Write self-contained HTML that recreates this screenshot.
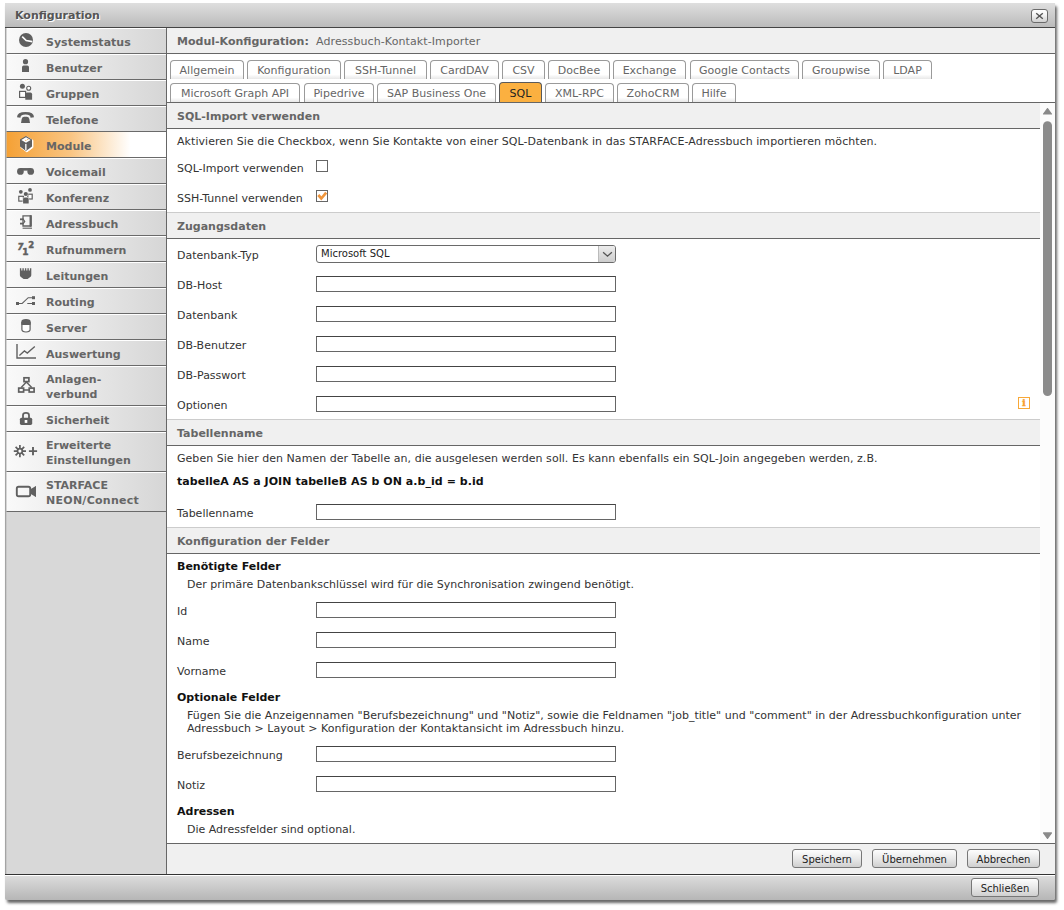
<!DOCTYPE html>
<html lang="de">
<head>
<meta charset="utf-8">
<title>Konfiguration</title>
<style>
*{box-sizing:border-box}
html,body{margin:0;padding:0}
body{width:1064px;height:910px;background:#fff;overflow:hidden;position:relative;font-family:"DejaVu Sans","Liberation Sans",sans-serif;font-size:11px;color:#333;line-height:13px}
.abs{position:absolute}
#win{position:absolute;left:5px;top:3px;width:1050px;height:897px;background:#d9d9d9;border-radius:0 2px 2px 2px;box-shadow:2px 3px 3px rgba(0,0,0,.6)}
#title{position:absolute;left:0;top:0;width:1050px;height:25px;background:linear-gradient(#dfdfdf,#bbb);border-bottom:1px solid #444;}
#title span{position:absolute;left:10px;top:6px;font-weight:bold;color:#555;text-shadow:1px 1px 0 #fff}
#close{position:absolute;left:1026px;top:6px;width:17px;height:14px;border:1px solid #6a6a6a;border-radius:3px;background:linear-gradient(#fff,#f4f4f4 40%,#cfcfcf)}
#close svg{position:absolute;left:0;top:0}
#ledge{position:absolute;left:0;top:25px;width:2px;height:846px;background:linear-gradient(90deg,#a4a4a4 50%,rgba(190,190,190,.6) 50%);z-index:6}
/* sidebar */
#side{position:absolute;left:0;top:25px;width:161px;height:846px;background:#d8d8d8}
.it{position:absolute;left:0;width:161px;height:26px;border-bottom:1px solid #6a6a6a;box-shadow:inset 0 1px 0 #fff;background:linear-gradient(90deg,#fafafa,#d6d6d6);font-weight:bold;color:#666}
.it span{position:absolute;left:41px;top:8px;white-space:nowrap}
.it.two{height:40px}
.it.two span{top:6px;line-height:15px}
.it.cur{box-shadow:none;background:linear-gradient(90deg,#f5a033 0,#f9c583 41%,#fff 78%,#fff 100%)}
.it svg{position:absolute;left:0;top:0}
#vline{position:absolute;left:161px;top:25px;width:1px;height:846px;background:#666}
/* main */
#main{position:absolute;left:162px;top:25px;width:888px;height:846px;background:#fff}
#mhead{position:absolute;left:0;top:0;width:888px;height:26px;background:#f0f0f0;border-bottom:1px solid #666}
#mhead b{position:absolute;left:10px;top:7px;color:#666}
#mhead span{position:absolute;left:149px;top:7px;color:#666;letter-spacing:.1px}
.tab{position:absolute;height:19px;border:1px solid #9a9a9a;border-bottom:none;border-radius:4px 4px 0 0;background:linear-gradient(#fff 75%,#e8e8e8);color:#666;padding:3px 0 0 0;text-align:center;white-space:nowrap}
.tab.on{background:#fbb040;color:#222;border-color:#5a5a5a;height:20px;margin-top:-1px;padding-top:4px}
#panel{position:absolute;left:0;top:74px;width:888px;height:742px;border-top:1px solid #666;background:#fff}
.sh{position:absolute;left:0;width:873px;height:26px;background:#f0f0f0;border-top:1px solid #ccc;border-bottom:1px solid #666;font-weight:bold;color:#666;padding:6px 0 0 10px}
.t{position:absolute;left:10px;white-space:nowrap;color:#333}
.b{font-weight:bold;color:#111}
.in{position:absolute;left:149px;width:300px;height:16px;border:1px solid #666;border-top-color:#444;background:#fff}

.sh.first{border-top:none;height:26px;padding-top:7px}
.sh{height:27px;padding-top:7px}
.cb{position:absolute;width:12px;height:12px;border:1px solid #666;background:#fff}
.cb svg{position:absolute;left:-1px;top:-1px}
.sel{position:absolute;width:300px;height:18px;border:1px solid #6a6a6a;border-radius:3px;background:#fff;font-size:10px}
.sel span{position:absolute;left:4px;top:1px;color:#222}
.sel i{position:absolute;right:0;top:0;width:17px;height:16px;border-left:1px solid #bbb;background:linear-gradient(#ececec,#cdcdcd);border-radius:0 2px 2px 0}
.sel i svg{position:absolute;left:0;top:0}
.info{position:absolute;width:12px;height:12px;border:1px solid #f8a838;color:#f8a030;-webkit-text-stroke:.3px #f8a030;font-family:"DejaVu Serif","Liberation Serif",serif;font-weight:bold;font-size:10px;line-height:10px;text-align:center}
#track{position:absolute;left:873px;top:75px;width:15px;height:740px;background:#fcfcfc}
#btnrow{position:absolute;left:0;top:815px;width:888px;height:31px;background:#f0f0f0;border-top:1px solid #666;}
.btn{position:absolute;height:19px;border:1px solid #777;border-radius:3px;background:linear-gradient(#fdfdfd,#e9e9e9 50%,#cfcfcf);color:#222;text-align:center;line-height:19px;font-size:10px}
#foot{position:absolute;left:0;top:871px;width:1050px;height:26px;border-top:1px solid #333;background:linear-gradient(#fff 0,#fff 1px,#dcdcdc 1px,#b6b6b6 100%);border-radius:0 0 2px 2px}
</style>
</head>
<body>
<div id="win">
 <div id="title"><span>Konfiguration</span><div id="close"><svg width="15" height="12" viewBox="0 0 15 12"><path d="M4.2 3.2 L10.8 8.8 M10.8 3.2 L4.2 8.8" stroke="#555" stroke-width="1.4" fill="none"/></svg></div></div>
 <div id="side">
<svg id="icons" width="45" height="490" viewBox="0 0 45 490" style="position:absolute;left:0;top:0;z-index:5" fill="#606060" stroke="none">
 <g transform="translate(-5,-28)">
  <!-- Systemstatus: clock -->
  <circle cx="26" cy="40" r="7"/>
  <path d="M22.2 36.6 L26.2 40.6 L32.3 41.6" fill="none" stroke="#fff" stroke-width="1.6"/>
  <!-- Benutzer -->
  <circle cx="25.5" cy="61.7" r="2.6"/>
  <path d="M22 72 V67.3 Q22 65.6 23.7 65.6 H27.3 Q29 65.6 29 67.3 V72 Z"/>
  <!-- Gruppen -->
  <circle cx="22.4" cy="86.3" r="2.5"/>
  <rect x="19.6" y="91.4" width="6" height="6" fill="#fff" stroke="#606060" stroke-width="1.2"/>
  <circle cx="28.7" cy="88.3" r="2" fill="#fff" stroke="#606060" stroke-width="1.1"/>
  <path d="M25.3 99.8 V94.2 Q25.3 92.6 26.9 92.6 H30.5 Q32.1 92.6 32.1 94.2 V99.8 Z"/>
  <!-- Telefone -->
  <path d="M17 117.2 Q17 112 25.5 112 Q34 112 34 117.2 L30.6 117.8 Q30.4 114.6 25.5 114.6 Q20.6 114.6 20.4 117.8 Z"/>
  <path d="M21 123 L21.7 119 Q22.2 116.7 24.2 116.7 H26.8 Q28.8 116.7 29.3 119 L30 123 Z"/>
  <!-- Module: cube -->
  <path d="M26.9 136.9 L32.9 140.3 V147.5 L26.9 151.9 L20.9 147.5 V140.3 Z" fill="#fff" stroke="#fff" stroke-width="1"/>
  <path d="M26 136 L32 139.4 V146.6 L26 151 L20 146.6 V139.4 Z"/>
  <path d="M26 137.2 L30.7 139.9 L26 142.7 L21.3 139.9 Z" fill="#fff"/>
  <rect x="25.2" y="143.9" width="1.3" height="6.4" fill="#fff"/>
  <path d="M25 140.4 H26.4 M27 139.5 H28.4" stroke="#f5a033" stroke-width=".7" fill="none"/>
  <!-- Voicemail -->
  <circle cx="20.4" cy="171.4" r="3.35"/>
  <circle cx="30.7" cy="171.4" r="3.35"/>
  <rect x="20.4" y="168.05" width="10.3" height="2.6"/>
  <!-- Konferenz -->
  <circle cx="20.8" cy="191.8" r="1.9"/>
  <circle cx="30" cy="189.9" r="1.9"/>
  <rect x="18.8" y="196.3" width="4.6" height="4.8" fill="#fff" stroke="#606060" stroke-width="1.2"/>
  <rect x="27.8" y="194.2" width="4.4" height="4.8" fill="#fff" stroke="#606060" stroke-width="1.2"/>
  <circle cx="25.8" cy="194" r="2.1" stroke="#fff" stroke-width=".9" paint-order="stroke"/>
  <path d="M23.1 203.4 V199 Q23.1 197.4 24.7 197.4 H27.1 Q28.7 197.4 28.7 199 V203.4 Z" stroke="#fff" stroke-width=".9" paint-order="stroke"/>
  <!-- Adressbuch -->
  <path d="M23 215.8 H30.4 V226 H23 Z" fill="none" stroke="#606060" stroke-width="1.3"/>
  <rect x="29.7" y="215.2" width="2.2" height="11.5"/>
  <path d="M22.6 228.2 H32" fill="none" stroke="#606060" stroke-width="1.1"/>
  <rect x="20" y="218.4" width="3.2" height="1.8"/>
  <rect x="20" y="222.7" width="3.2" height="1.8"/>
  <path d="M22.8 218.6 L24.8 221.4 L22.8 224.3" fill="none" stroke="#606060" stroke-width="1.1"/>
  <!-- Leitungen -->
  <path d="M19.9 268.3 H21.3 V270.6 H22.4 V268.3 H23.8 V270.6 H24.9 V268.3 H26.3 V270.6 H27.4 V268.3 H28.8 V270.6 H29.9 V268.3 H31.3 V275.2 Q31.3 276.6 29.6 277.6 L27.6 279 H23.6 L21.6 277.6 Q19.9 276.6 19.9 275.2 Z"/>
  <!-- Routing -->
  <rect x="16" y="302" width="3" height="3"/>
  <rect x="32" y="296.2" width="3" height="3"/>
  <rect x="32" y="302" width="3" height="3"/>
  <path d="M18.5 303.5 H22.2 L28.2 297.7 H32.5 M27.3 303.5 H32.5" fill="none" stroke="#606060" stroke-width="1.1"/>
  <!-- Server -->
  <path d="M21.9 322 V329.6 Q21.9 332 26 332 Q30.1 332 30.1 329.6 V322" fill="#fff" stroke="#606060" stroke-width="1.2"/>
  <path d="M21.3 324.4 V321.8 Q21.3 319.1 26 319.1 Q30.7 319.1 30.7 321.8 V324.4 Q30.7 325 26 325 Q21.3 325 21.3 324.4 Z"/>
  <!-- Auswertung -->
  <path d="M17 344 V358 H36" fill="none" stroke="#606060" stroke-width="1.4"/>
  <path d="M19.4 355.4 L24.4 350.9 L27.3 353.1 L34.8 346.4" fill="none" stroke="#606060" stroke-width="1.3"/>
  <!-- Anlagenverbund -->
  <g fill="none" stroke="#606060" stroke-width="1.7">
   <rect x="24" y="377.8" width="4.9" height="3.8"/>
   <rect x="18.7" y="388.1" width="4.9" height="3.9"/>
   <rect x="29.2" y="388.1" width="4.9" height="3.9"/>
   <path d="M26.4 382 L21.2 387.6 M26.4 382 L31.7 387.6 M23.6 390 H29.2" stroke-width="1.45"/>
  </g>
  <!-- Sicherheit -->
  <path d="M23 418 V415.2 Q23 412.9 26 412.9 Q29 412.9 29 415.2 V418" fill="none" stroke="#606060" stroke-width="1.8"/>
  <rect x="19.9" y="417.7" width="12.3" height="7.2" rx="1.6"/>
  <rect x="24.7" y="420" width="2.6" height="2.9" fill="#fff"/>
  <!-- Erweiterte Einstellungen -->
  <g stroke="#606060" stroke-width="1.7" fill="none">
   <path d="M19.9 445 V457.2 M13.8 451.1 H26 M15.6 446.8 L24.2 455.4 M24.2 446.8 L15.6 455.4"/>
   <circle cx="19.9" cy="451.1" r="2.4" fill="#fff" stroke-width="1.7"/>
   <path d="M33 447 V455.2 M28.9 451.1 H37.1" stroke-width="1.9"/>
  </g>
  <!-- NEON camera -->
  <rect x="16.8" y="486.8" width="13.4" height="9.4" rx="1.8" fill="none" stroke="#606060" stroke-width="1.9"/>
  <path d="M30.4 491.4 L35.9 486 V497 L30.4 491.6 Z"/>
  <path d="M30 489.4 L35.9 486 V497 L30 493.6 Z"/>
 </g>
 <!-- Rufnummern digits -->
 <g font-family="'DejaVu Sans','Liberation Sans',sans-serif" font-weight="bold" fill="#606060" stroke="#606060" stroke-width=".45">
  <text x="12.6" y="221.8" font-size="8.5" font-style="italic">7</text>
  <text x="17.2" y="226.7" font-size="9">1</text>
  <text x="23.2" y="220.2" font-size="8.5">2</text>
 </g>
</svg>
  <div class="it" style="top:0"><span>Systemstatus</span></div>
  <div class="it" style="top:26px"><span>Benutzer</span></div>
  <div class="it" style="top:52px"><span>Gruppen</span></div>
  <div class="it" style="top:78px"><span>Telefone</span></div>
  <div class="it cur" style="top:104px"><span>Module</span></div>
  <div class="it" style="top:130px"><span>Voicemail</span></div>
  <div class="it" style="top:156px"><span>Konferenz</span></div>
  <div class="it" style="top:182px"><span>Adressbuch</span></div>
  <div class="it" style="top:208px"><span>Rufnummern</span></div>
  <div class="it" style="top:234px"><span>Leitungen</span></div>
  <div class="it" style="top:260px"><span>Routing</span></div>
  <div class="it" style="top:286px"><span>Server</span></div>
  <div class="it" style="top:312px"><span>Auswertung</span></div>
  <div class="it two" style="top:338px"><span>Anlagen-<br>verbund</span></div>
  <div class="it" style="top:378px"><span>Sicherheit</span></div>
  <div class="it two" style="top:404px"><span>Erweiterte<br>Einstellungen</span></div>
  <div class="it two" style="top:444px"><span>STARFACE<br><span style="position:static;letter-spacing:.27px">NEON/Connect</span></span></div>
 </div>
 <div id="vline"></div><div id="ledge"></div>
 <div id="main">
  <div id="mhead"><b>Modul-Konfiguration:</b><span>Adressbuch-Kontakt-Importer</span></div>
  <div id="tabs">
   <div class="tab" style="left:3px;top:32px;width:74px">Allgemein</div>
   <div class="tab" style="left:80px;top:32px;width:94px">Konfiguration</div>
   <div class="tab" style="left:177px;top:32px;width:83px">SSH-Tunnel</div>
   <div class="tab" style="left:263px;top:32px;width:69px">CardDAV</div>
   <div class="tab" style="left:335px;top:32px;width:43px">CSV</div>
   <div class="tab" style="left:381px;top:32px;width:62px">DocBee</div>
   <div class="tab" style="left:446px;top:32px;width:73px">Exchange</div>
   <div class="tab" style="left:523px;top:32px;width:109px">Google Contacts</div>
   <div class="tab" style="left:635px;top:32px;width:78px">Groupwise</div>
   <div class="tab" style="left:716px;top:32px;width:49px">LDAP</div>
   <div class="tab" style="left:3px;top:55px;width:130px">Microsoft Graph API</div>
   <div class="tab" style="left:137px;top:55px;width:70px">Pipedrive</div>
   <div class="tab" style="left:210px;top:55px;width:119px">SAP Business One</div>
   <div class="tab on" style="left:332px;top:55px;width:43px">SQL</div>
   <div class="tab" style="left:378px;top:55px;width:69px">XML-RPC</div>
   <div class="tab" style="left:450px;top:55px;width:72px">ZohoCRM</div>
   <div class="tab" style="left:525px;top:55px;width:44px">Hilfe</div>
  </div><!--/tabs-->
  <div id="panel">
   <div class="sh first" style="top:0px">SQL-Import verwenden</div>
   <div class="t" style="left:10px;top:32px;letter-spacing:0.056px">Aktivieren Sie die Checkbox, wenn Sie Kontakte von einer SQL-Datenbank in das STARFACE-Adressbuch importieren möchten.</div>
   <div class="t" style="left:10px;top:59px">SQL-Import verwenden</div>
   <div class="cb" style="left:149px;top:57px"></div>
   <div class="t" style="left:10px;top:89px">SSH-Tunnel verwenden</div>
   <div class="cb" style="left:149px;top:87px"><svg width="12" height="12" viewBox="0 0 12 12"><path d="M2.3 5 L5.3 8.5 L10.2 2.6" fill="none" stroke="#ef953c" stroke-width="2.7"/></svg></div>
   <div class="sh" style="top:109px">Zugangsdaten</div>
   <div class="t" style="left:10px;top:146px">Datenbank-Typ</div>
   <div class="sel" style="left:149px;top:142px"><span>Microsoft SQL</span><i><svg width="17" height="16" viewBox="0 0 17 16"><path d="M4.1 6.2 L8.5 10.2 L12.9 6.2" fill="none" stroke="#555" stroke-width="1.3"/></svg></i></div>
   <div class="t" style="left:10px;top:176px">DB-Host</div>
   <div class="in" style="top:173px"></div>
   <div class="t" style="left:10px;top:206px">Datenbank</div>
   <div class="in" style="top:203px"></div>
   <div class="t" style="left:10px;top:236px">DB-Benutzer</div>
   <div class="in" style="top:233px"></div>
   <div class="t" style="left:10px;top:266px">DB-Passwort</div>
   <div class="in" style="top:263px"></div>
   <div class="t" style="left:10px;top:296px">Optionen</div>
   <div class="in" style="top:293px"></div>
   <div class="info" style="left:851px;top:294px">i</div>
   <div class="sh" style="top:316px">Tabellenname</div>
   <div class="t" style="left:10px;top:349px;letter-spacing:0.04px">Geben Sie hier den Namen der Tabelle an, die ausgelesen werden soll. Es kann ebenfalls ein SQL-Join angegeben werden, z.B.</div>
   <div class="t b" style="left:10px;top:372px;letter-spacing:0.05px">tabelleA AS a JOIN tabelleB AS b ON a.b_id = b.id</div>
   <div class="t" style="left:10px;top:404px">Tabellenname</div>
   <div class="in" style="top:401px"></div>
   <div class="sh" style="top:424px">Konfiguration der Felder</div>
   <div class="t b" style="left:10px;top:457px">Benötigte Felder</div>
   <div class="t" style="left:20px;top:475px">Der primäre Datenbankschlüssel wird für die Synchronisation zwingend benötigt.</div>
   <div class="t" style="left:10px;top:502px">Id</div>
   <div class="in" style="top:499px"></div>
   <div class="t" style="left:10px;top:532px">Name</div>
   <div class="in" style="top:529px"></div>
   <div class="t" style="left:10px;top:562px">Vorname</div>
   <div class="in" style="top:559px"></div>
   <div class="t b" style="left:10px;top:588px">Optionale Felder</div>
   <div class="t" style="left:20px;top:606px;letter-spacing:0.022px">Fügen Sie die Anzeigennamen "Berufsbezeichnung" und "Notiz", sowie die Feldnamen "job_title" und "comment" in der Adressbuchkonfiguration unter<br>Adressbuch &gt; Layout &gt; Konfiguration der Kontaktansicht im Adressbuch hinzu.</div>
   <div class="t" style="left:10px;top:646px">Berufsbezeichnung</div>
   <div class="in" style="top:643px"></div>
   <div class="t" style="left:10px;top:676px">Notiz</div>
   <div class="in" style="top:673px"></div>
   <div class="t b" style="left:10px;top:702px">Adressen</div>
   <div class="t" style="left:20px;top:720px">Die Adressfelder sind optional.</div>
  </div><!--/panel-->
  <div id="track"></div>
  <svg id="sb" width="15" height="742" viewBox="0 0 15 742" style="position:absolute;left:873px;top:75px"><g transform="translate(-1040,-103)" fill="#8a8a8a" stroke="#8a8a8a" stroke-width="1.2" stroke-linejoin="round"><path d="M1047.5 108.6 L1051.5 114 H1043.5 Z"/><rect x="1043" y="121.2" width="9" height="274.8" rx="4.5" stroke="none"/><path d="M1047.5 838.4 L1051.5 832.9 H1043.5 Z"/></g></svg>
  <div id="btnrow">
   <div class="btn" style="left:625px;top:5px;width:70px">Speichern</div>
   <div class="btn" style="left:705px;top:5px;width:85px">Übernehmen</div>
   <div class="btn" style="left:800px;top:5px;width:73px">Abbrechen</div>
  </div>
 </div>
 <div id="foot"><div class="btn" style="left:966px;top:3px;width:68px">Schließen</div></div>
</div>
</body>
</html>
